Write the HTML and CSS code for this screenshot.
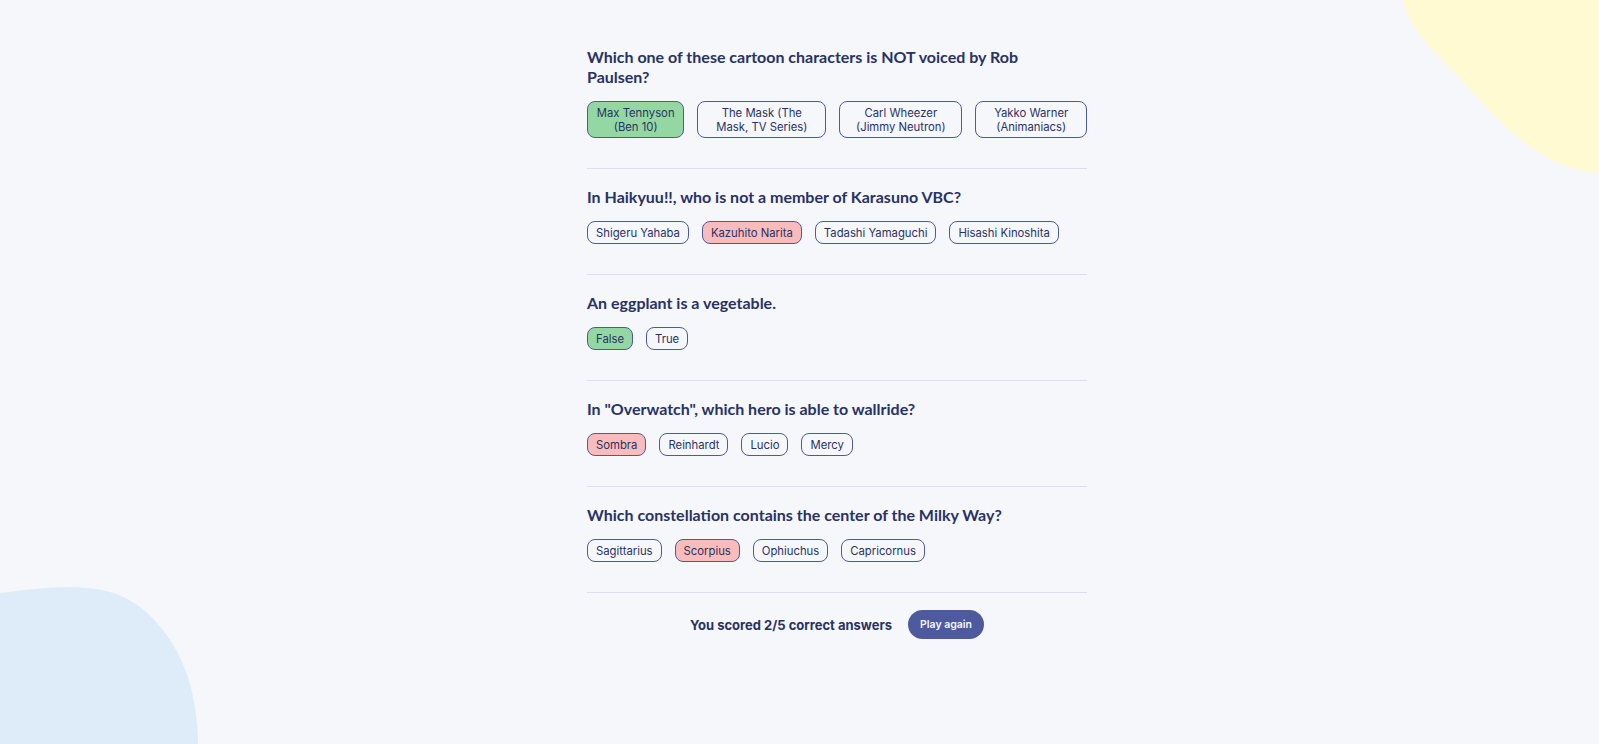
FILE: index.html
```html
<!DOCTYPE html>
<html lang="en">
<head>
<meta charset="utf-8">
<title>Quizzical</title>
<link rel="stylesheet" href="styles.css">
</head>
<body>
<svg class="blob blob-yellow" viewBox="0 0 196 174" preserveAspectRatio="none" aria-hidden="true">
  <path d="M0,0 C5,20 15,35 30,50 L77,100 C95,120 115,140 140,155 C160,167 180,172 196,173 L196,0 Z" fill="#FFFAD1"/>
</svg>
<svg class="blob blob-blue" viewBox="0 0 200 157" preserveAspectRatio="none" aria-hidden="true">
  <path d="M0,6 C25,3 50,0 70,0 C100,1 120,5 140,20 C165,40 185,70 193,110 C197,130 198,145 198,157 L0,157 Z" fill="#DEEBF8"/>
</svg>
<div class="page">
  <main class="quiz">
    <section class="question">
      <h2 class="q-title">Which one of these cartoon characters is NOT voiced by Rob Paulsen?</h2>
      <div class="answers">
        <button class="answer correct">Max Tennyson (Ben 10)</button>
        <button class="answer">The Mask (The Mask, TV Series)</button>
        <button class="answer">Carl Wheezer (Jimmy Neutron)</button>
        <button class="answer">Yakko Warner (Animaniacs)</button>
      </div>
    </section>
    <section class="question">
      <h2 class="q-title">In Haikyuu!!, who is not a member of Karasuno VBC?</h2>
      <div class="answers">
        <button class="answer">Shigeru Yahaba</button>
        <button class="answer wrong">Kazuhito Narita</button>
        <button class="answer">Tadashi Yamaguchi</button>
        <button class="answer">Hisashi Kinoshita</button>
      </div>
    </section>
    <section class="question">
      <h2 class="q-title">An eggplant is a vegetable.</h2>
      <div class="answers">
        <button class="answer correct">False</button>
        <button class="answer">True</button>
      </div>
    </section>
    <section class="question">
      <h2 class="q-title">In "Overwatch", which hero is able to wallride?</h2>
      <div class="answers">
        <button class="answer wrong">Sombra</button>
        <button class="answer">Reinhardt</button>
        <button class="answer">Lucio</button>
        <button class="answer">Mercy</button>
      </div>
    </section>
    <section class="question">
      <h2 class="q-title">Which constellation contains the center of the Milky Way?</h2>
      <div class="answers">
        <button class="answer">Sagittarius</button>
        <button class="answer wrong">Scorpius</button>
        <button class="answer">Ophiuchus</button>
        <button class="answer">Capricornus</button>
      </div>
    </section>
    <div class="result">
      <p class="score">You scored 2/5 correct answers</p>
      <button class="play">Play again</button>
    </div>
  </main>
</div>
</body>
</html>
```
FILE: styles.css
```css
* { box-sizing: border-box; }
html, body { margin: 0; padding: 0; }
body {
  background: #F5F7FB;
  color: #293264;
  font-family: Inter, "Noto Sans", sans-serif;
  height: 744px;
  overflow: hidden;
  position: relative;
}
.blob { position: absolute; display: block; }
.blob-yellow { top: 0; right: 0; width: 196px; height: 174px; }
.blob-blue { left: 0; bottom: 0; width: 200px; height: 157px; }
.page {
  position: relative;
  display: flex;
  justify-content: center;
  padding-left: 75px;
  padding-top: 29px;
}
.quiz { width: 500px; }
.question {
  padding: 18px 0 30px;
  border-bottom: 1px solid #DBDEF0;
}
.q-title {
  margin: 0 0 14px;
  max-width: 470px;
  font-family: Lato, sans-serif;
  font-weight: 700;
  font-size: 16px;
  line-height: 20px;
  color: #293264;
}
.answers {
  display: flex;
  gap: 13px;
}
.answer {
  font-family: Inter, sans-serif;
  font-size: 11.3px;
  line-height: 14px;
  color: #293264;
  background: transparent;
  border: 1px solid #4D5B9E;
  border-radius: 8px;
  padding: 3.5px 8px;
  text-align: center;
}
.answer.correct { background: #94D7A2; }
.answer.wrong { background: #F8BCBC; }
.result {
  display: flex;
  justify-content: center;
  align-items: center;
  gap: 16px;
  padding-top: 17px;
}
.score {
  margin: 0;
  font-family: Inter, sans-serif;
  font-weight: 700;
  font-size: 13px;
  color: #293264;
}
.play {
  font-family: Inter, sans-serif;
  font-weight: 600;
  font-size: 10.5px;
  color: #F5F7FB;
  background: #4D5B9E;
  border: none;
  border-radius: 15px;
  height: 29px;
  padding: 0 12px;
}
```
